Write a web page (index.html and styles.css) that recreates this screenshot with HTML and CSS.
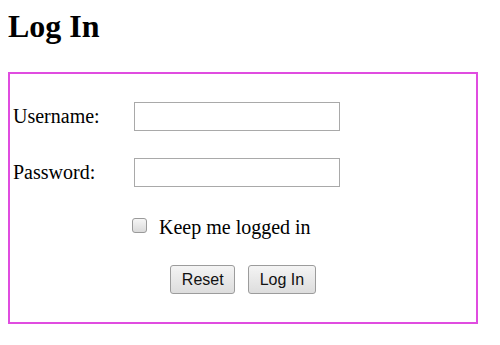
FILE: index.html
```html
<!DOCTYPE html>
<html lang="en">
<head>
    <meta charset="UTF-8">
    <title>Log In</title>
    <link rel="stylesheet" href="styles.css">
</head>
<body>
    <h1 class="title">Log In</h1>

    <!-- Login form -->
    <form class="login-box">
        <div class="form-row">
            <label for="username">Username:</label>
            <input type="text" id="username">
        </div>
        <div class="form-row">
            <label for="password">Password:</label>
            <input type="password" id="password" class="pw">
        </div>
        <div class="form-row keep-row">
            <span></span>
            <label class="keep"><input type="checkbox" class="check"> Keep me logged in</label>
        </div>
        <div class="buttons">
            <button type="reset">Reset</button>
            <button type="submit">Log In</button>
        </div>
    </form>
</body>
</html>
```

FILE: styles.css
```css
* {
    box-sizing: border-box;
}

body {
    margin: 8px;
    font-family: "Liberation Serif", "Times New Roman", serif;
    color: #000;
}

.title {
    margin: 0 0 27px;
    font-size: 32px;
    font-weight: bold;
}

/* Form box */
.login-box {
    width: 470px;
    border: 2px solid #e04ce0;
    padding: 28px 3px 28px;
    display: flex;
    flex-direction: column;
    gap: 27px;
    font-size: 20px;
}

.form-row {
    display: grid;
    grid-template-columns: 121px 206px;
    align-items: center;
}

.form-row input[type="text"],
.form-row input[type="password"] {
    width: 206px;
    height: 29px;
    margin: 0;
    border: 1px solid #a9a9a9;
    padding: 2px 4px;
    font-size: 16px;
}

.form-row .pw {
    margin-left: -1px;
    width: 205px;
}

.keep-row {
    margin-top: 2px;
    margin-bottom: -1px;
}

.keep {
    display: flex;
    align-items: center;
    gap: 12px;
    margin-left: -2px;
    white-space: nowrap;
    line-height: 23px;
}

.check {
    -webkit-appearance: none;
    appearance: none;
    width: 15px;
    height: 15px;
    margin: 0;
    position: relative;
    top: -2px;
    border: 1px solid #9a9a9a;
    border-radius: 3px;
    background: linear-gradient(#f6f6f6, #dadada);
}

.buttons {
    display: flex;
    justify-content: center;
    gap: 13px;
}

button {
    height: 29px;
    padding: 0 10.5px;
    font-family: "Liberation Sans", Arial, sans-serif;
    font-size: 16px;
    color: #111;
    border: 1px solid #9c9c9c;
    border-radius: 3px;
    background: linear-gradient(#f4f4f4, #dddddd);
}
```
